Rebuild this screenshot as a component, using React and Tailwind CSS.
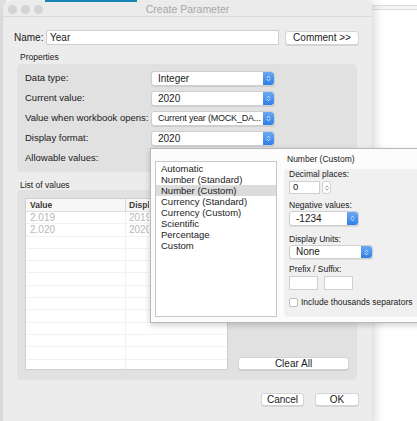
import { ChevronUp, ChevronDown } from 'lucide-react';

const font = { fontFamily: '"Liberation Sans", Arial, sans-serif' };

function Stepper() {
  return (
    <span className="flex w-[11px] shrink-0 flex-col items-center justify-center self-stretch rounded-r-[3px] bg-gradient-to-b from-[#6aa9f4] to-[#2f7fe6]">
      <ChevronUp className="-mb-[3px] h-[6px] w-[7px] text-white" strokeWidth={3} />
      <ChevronDown className="h-[6px] w-[7px] text-white" strokeWidth={3} />
    </span>
  );
}

function Select({ value, width, height = 15, textClass = 'text-[10px]' }) {
  return (
    <div
      className="flex items-center rounded-[3px] border border-[#cfcfcf] bg-white shadow-[0_1px_0_rgba(0,0,0,0.08)]"
      style={{ width, height }}
    >
      <span className={`flex-1 overflow-hidden whitespace-nowrap pl-[6px] leading-none text-[#1a1a1a] ${textClass}`}>
        {value}
      </span>
      <Stepper />
    </div>
  );
}

function Button({ children, className = '' }) {
  return (
    <div
      className={`flex h-[13px] items-center justify-center rounded-[3px] border border-[#d4d4d4] bg-white text-[10px] leading-none text-[#1a1a1a] shadow-[0_1px_0_rgba(0,0,0,0.1)] ${className}`}
    >
      {children}
    </div>
  );
}

const props = [
  ['Data type:', 'Integer', 'text-[10px]'],
  ['Current value:', '2020', 'text-[10px]'],
  ['Value when workbook opens:', 'Current year (MOCK_DA...', 'text-[9px] tracking-[-0.2px]'],
  ['Display format:', '2020', 'text-[10px]'],
];

const formats = [
  'Automatic',
  'Number (Standard)',
  'Number (Custom)',
  'Currency (Standard)',
  'Currency (Custom)',
  'Scientific',
  'Percentage',
  'Custom',
];

const rows = ['2.019', '2.020', '', '', '', '', '', '', '', '', '', '', '', ''];

export default function App() {
  return (
    <div className="relative h-[421px] w-[417px] overflow-hidden bg-white" style={font}>
      {/* background window */}
      <div className="absolute left-0 top-0 h-full w-[6px] bg-[#e4e4e4]" />
      <div className="absolute left-[45px] top-0 h-[2px] w-[92px] bg-[#1a8fc4]" />
      <div className="absolute left-[370px] top-[5px] h-[5px] w-[47px] border-y border-[#dcdcdc] bg-[#f4f4f4]" />

      {/* dialog */}
      <div className="absolute left-[3px] top-[2px] flex h-[425px] w-[369px] flex-col rounded-t-[5px] bg-[#ececec] shadow-[2px_0_12px_rgba(0,0,0,0.18)]">
        <div className="relative flex h-[15px] shrink-0 items-center justify-center rounded-t-[5px] border-b border-[#dadada] bg-[#ebebeb]">
          <div className="absolute left-[5px] flex gap-[4px]">
            <span className="h-[9px] w-[9px] rounded-full bg-[#d3d3d3]" />
            <span className="h-[9px] w-[9px] rounded-full bg-[#d3d3d3]" />
            <span className="h-[9px] w-[9px] rounded-full bg-[#d3d3d3]" />
          </div>
          <span className="text-[10.5px] leading-none text-[#a8a8a8]">Create Parameter</span>
        </div>

        {/* name row */}
        <div className="mt-[13px] flex h-[15px] items-center pl-[11px]">
          <span className="w-[32px] text-[10px] text-[#1a1a1a]">Name:</span>
          <div className="flex h-[15px] w-[233px] items-center border border-[#cfcfcf] bg-white pl-[3px] text-[10px] text-[#1a1a1a]">
            Year
          </div>
          <Button className="ml-[6px] h-[14px] w-[74px]">Comment &gt;&gt;</Button>
        </div>

        <div className="mt-[7px] pl-[17px] text-[8.5px] leading-[10px] text-[#1a1a1a]">Properties</div>

        <div className="ml-[14px] mt-[2px] flex h-[108px] w-[340px] shrink-0 flex-col gap-[5px] rounded-[4px] bg-[#e1e1e1] pl-[8px] pt-[7px]">
          {props.map(([label, value, tc]) => (
            <div key={label} className="flex h-[15px] items-center">
              <span className="w-[126px] whitespace-nowrap text-[9.5px] text-[#1a1a1a]">{label}</span>
              <Select value={value} width={124} textClass={tc} />
            </div>
          ))}
          <div className="flex h-[15px] items-center">
            <span className="text-[9.5px] text-[#1a1a1a]">Allowable values:</span>
          </div>
        </div>

        <div className="mt-[8px] pl-[17px] text-[8.5px] leading-[10px] text-[#1a1a1a]">List of values</div>

        <div className="ml-[14px] flex h-[190px] w-[340px] shrink-0 items-end gap-[10px] rounded-[4px] bg-[#e1e1e1] pb-[10px] pl-[8px]">
          <div className="mt-[8px] flex h-[172px] w-[203px] flex-col self-start overflow-hidden border border-[#cfcfcf] bg-white">
            <div className="flex h-[13px] shrink-0 border-b border-[#e0e0e0] bg-[#f7f7f7] text-[8.5px] font-bold leading-[13px] text-[#3a3a3a]">
              <span className="w-[100px] border-r border-[#d8d8d8] pl-[4px]">Value</span>
              <span className="w-[23px] overflow-hidden whitespace-nowrap pl-[3px]">Display As</span>
            </div>
            {rows.map((v, i) => (
              <div
                key={i}
                className="flex h-[12.3px] shrink-0 border-b border-[#f2f2f2] text-[10px] leading-[12px] text-[#b8b8b8]"
              >
                <span className="w-[100px] border-r border-[#f0f0f0] pl-[4px]">{v}</span>
                <span className="w-[23px] overflow-hidden whitespace-nowrap pl-[3px]">{v ? v.replace('.', '') : ''}</span>
              </div>
            ))}
          </div>
          <Button className="w-[111px]">Clear All</Button>
        </div>

        <div className="mt-[13px] flex justify-end gap-[11px] pr-[13px]">
          <Button className="w-[43px]">Cancel</Button>
          <Button className="w-[44px]">OK</Button>
        </div>
      </div>

      {/* format popup */}
      <div className="absolute left-[150px] top-[148px] flex h-[175px] w-[280px] border border-[#b9b9b9] bg-[#fcfcfc] shadow-[0_2px_6px_rgba(0,0,0,0.2)]">
        <div className="ml-[4px] mt-[12px] h-[156px] w-[122px] border border-[#c8c8c8] bg-white pt-[1px]">
          {formats.map((f) => (
            <div
              key={f}
              className={`h-[11px] pl-[5px] text-[9.5px] leading-[11px] text-[#1a1a1a] ${f === 'Number (Custom)' ? 'bg-[#dcdcdc]' : ''}`}
            >
              {f}
            </div>
          ))}
        </div>
        <div className="ml-[7px] flex flex-1 flex-col">
          <div className="pl-[3px] pt-[5px] text-[8.5px] leading-[10px] text-[#1a1a1a]">Number (Custom)</div>
          <div className="mt-[5px] h-[148px] rounded-[4px] bg-[#f0f0f0] pl-[5px] text-[8.5px] text-[#1a1a1a]">
            <div className="leading-[10px]">Decimal places:</div>
            <div className="mt-[2px] flex h-[13px] items-center gap-[2px]">
              <div className="flex h-[13px] w-[31px] items-center border border-[#cfcfcf] bg-white pl-[3px] text-[9.5px]">0</div>
              <div className="flex h-[13px] w-[9px] flex-col items-center justify-center rounded-[3px] border border-[#cfcfcf] bg-white">
                <ChevronUp className="-mb-[2px] h-[5px] w-[6px] text-[#555]" strokeWidth={3} />
                <ChevronDown className="h-[5px] w-[6px] text-[#555]" strokeWidth={3} />
              </div>
            </div>
            <div className="mt-[6px] leading-[10px]">Negative values:</div>
            <div className="mt-[1px]">
              <Select value="-1234" width={70} />
            </div>
            <div className="mt-[8px] leading-[10px]">Display Units:</div>
            <div className="mt-[1px]">
              <Select value="None" width={84} height={14} />
            </div>
            <div className="mt-[5px] leading-[10px]">Prefix / Suffix:</div>
            <div className="mt-[2px] flex gap-[6px]">
              <div className="h-[14px] w-[29px] border border-[#d0d0d0] bg-white" />
              <div className="h-[14px] w-[29px] border border-[#d0d0d0] bg-white" />
            </div>
            <div className="mt-[7px] flex items-center gap-[3px]">
              <span className="h-[9px] w-[9px] rounded-[2px] border border-[#bdbdbd] bg-white" />
              <span className="leading-[10px]">Include thousands separators</span>
            </div>
          </div>
        </div>
      </div>
    </div>
  );
}
